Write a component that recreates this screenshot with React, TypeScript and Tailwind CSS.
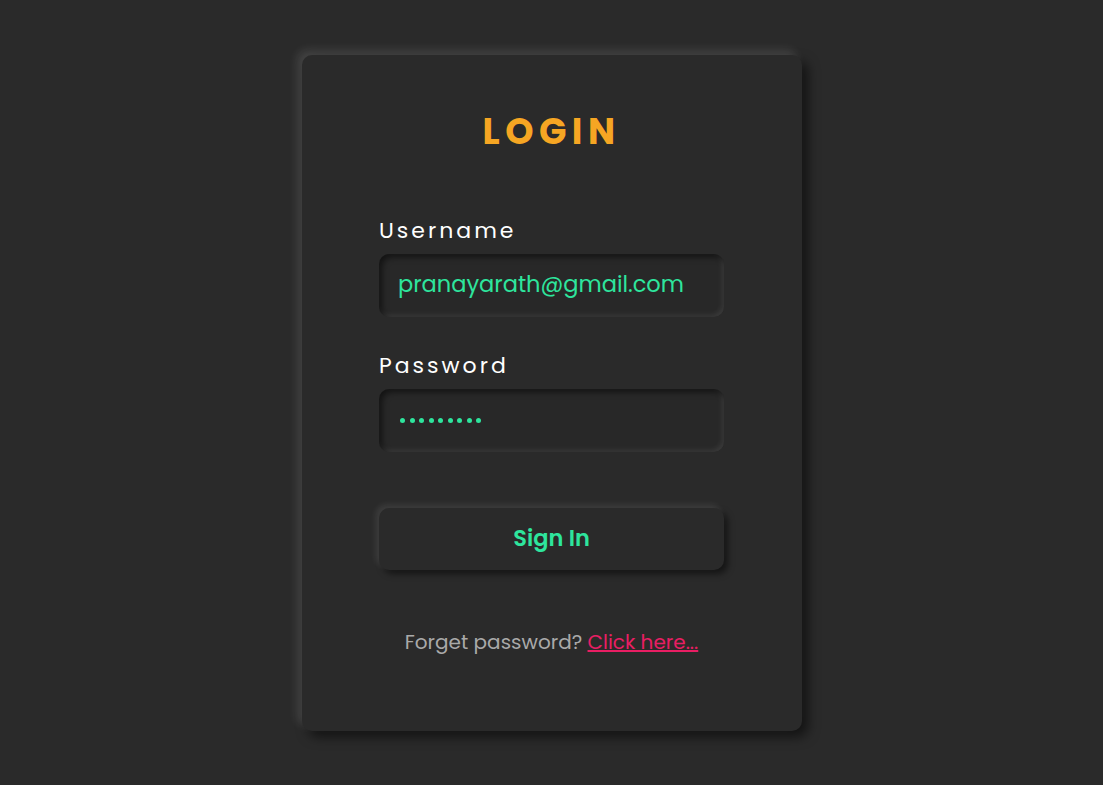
export default function App() {
  return (
    <div
      className="min-h-screen w-full flex items-center justify-center bg-[#2a2a2a]"
      style={{ fontFamily: "Poppins, 'Noto Sans', sans-serif" }}
    >
      {/* Card */}
      <div className="w-[500px] h-[676px] rounded-[10px] bg-[#2a2a2a] flex flex-col items-center pt-[53px] shadow-[-5px_-5px_10px_rgba(255,255,255,0.12),6px_6px_12px_rgba(0,0,0,0.55)]">
        <h1 className="text-[36px] leading-[48px] font-bold tracking-[5.5px] text-[#f6a623]">LOGIN</h1>

        <div className="w-[345px] mt-[60px] flex flex-col">
          <label className="text-[22px] leading-[30px] tracking-[3px] text-white mb-2">Username</label>
          <div className="h-[63px] rounded-[10px] bg-[#282828] flex items-center px-[19px] shadow-[inset_3px_3px_6px_rgba(0,0,0,0.55),inset_-2px_-2px_5px_rgba(255,255,255,0.1)]">
            <span className="text-[22.5px] text-[#2ee59d]">pranayarath@gmail.com</span>
          </div>

          <label className="text-[22px] leading-[30px] tracking-[3px] text-white mt-[34px] mb-2">Password</label>
          <div className="h-[63px] rounded-[10px] bg-[#282828] flex items-center px-[21px] shadow-[inset_3px_3px_6px_rgba(0,0,0,0.55),inset_-2px_-2px_5px_rgba(255,255,255,0.1)]">
            <span className="flex gap-[4.5px]">
              {Array.from({ length: 9 }).map((_, i) => (
                <span key={i} className="w-[5px] h-[5px] rounded-full bg-[#2ee59d]" />
              ))}
            </span>
          </div>

          <button className="mt-[56px] h-[62px] rounded-[10px] bg-[#2a2a2a] text-[22.5px] font-semibold text-[#2ee59d] shadow-[-3px_-3px_6px_rgba(255,255,255,0.1),4px_4px_6px_rgba(0,0,0,0.5)]">
            Sign In
          </button>
        </div>

        <p className="mt-[58px] text-[20px] leading-[28px] text-[#a9a9a9]">
          Forget password?{" "}
          <a href="#" className="text-[#e91e63] underline">Click here...</a>
        </p>
      </div>
    </div>
  );
}
